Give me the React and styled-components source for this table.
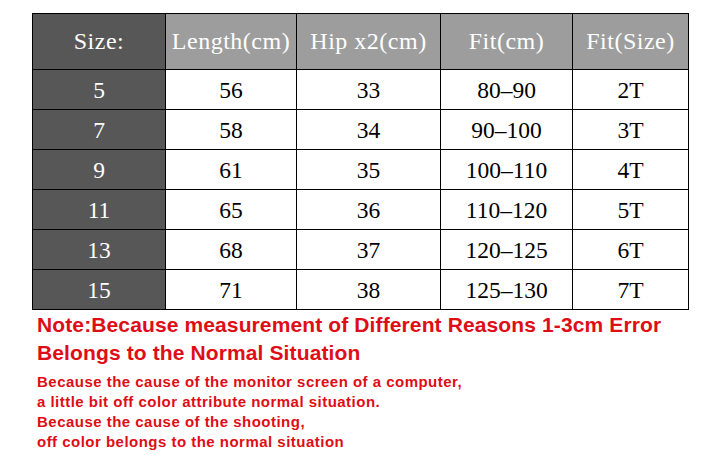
import React from 'react';
import styled, { createGlobalStyle } from 'styled-components';

const GlobalStyle = createGlobalStyle`
	html, body {
		margin: 0;
		padding: 0;
		background: #ffffff;
	}
`;

const headers = ['Size:', 'Length(cm)', 'Hip x2(cm)', 'Fit(cm)', 'Fit(Size)'];

const rows = [
	['5', '56', '33', '80–90', '2T'],
	['7', '58', '34', '90–100', '3T'],
	['9', '61', '35', '100–110', '4T'],
	['11', '65', '36', '110–120', '5T'],
	['13', '68', '37', '120–125', '6T'],
	['15', '71', '38', '125–130', '7T']
];

const Page = styled.div`
	width: 721px;
	height: 455px;
	padding: 13px 0 0 32px;
	box-sizing: border-box;
	overflow: hidden;
`;

const Table = styled.div`
	display: grid;
	grid-template-columns: 132px 130px 143px 131px 115px;
	grid-template-rows: 55px repeat(6, 39px);
	gap: 1px;
	width: max-content;
	background: #000000;
	border: 1px solid #000000;
`;

const Cell = styled.div`
	display: flex;
	align-items: center;
	justify-content: center;
	font-family: 'Liberation Serif', 'Times New Roman', serif;
	white-space: nowrap;
	background: ${(p) => (p.$dark ? '#575757' : p.$head ? '#9d9d9d' : '#ffffff')};
	color: ${(p) => (p.$dark || p.$head ? '#ffffff' : '#000000')};
	font-size: ${(p) => (p.$head ? '24px' : '23.5px')};
	letter-spacing: ${(p) => (p.$head ? '0.5px' : '0')};
	padding-top: ${(p) => (p.$head ? '0' : '1px')};
`;

const Notes = styled.div`
	padding-left: 5px;
	color: #de0d16;
	font-family: 'Liberation Sans', Arial, sans-serif;
	font-weight: bold;
`;

const MainNote = styled.p`
	margin: 1px 0 0;
	font-size: 21px;
	line-height: 28px;
	letter-spacing: 0.12px;
`;

const SmallNote = styled.p`
	margin: 5px 0 0;
	font-size: 15px;
	line-height: 20px;
	letter-spacing: 0.48px;
`;

export default function App() {
	return (
		<Page>
			<GlobalStyle />
			<Table>
				{headers.map((h, i) => (
					<Cell key={h} $head $dark={i === 0}>
						{h}
					</Cell>
				))}
				{rows.map((row) =>
					row.map((value, i) => (
						<Cell key={row[0] + '-' + i} $dark={i === 0}>
							{value}
						</Cell>
					))
				)}
			</Table>
			<Notes>
				<MainNote>
					Note:Because measurement of Different Reasons 1-3cm Error
					<br />
					Belongs to the Normal Situation
				</MainNote>
				<SmallNote>
					Because the cause of the monitor screen of a computer,
					<br />
					a little bit off color attribute normal situation.
					<br />
					Because the cause of the shooting,
					<br />
					off color belongs to the normal situation
				</SmallNote>
			</Notes>
		</Page>
	);
}
